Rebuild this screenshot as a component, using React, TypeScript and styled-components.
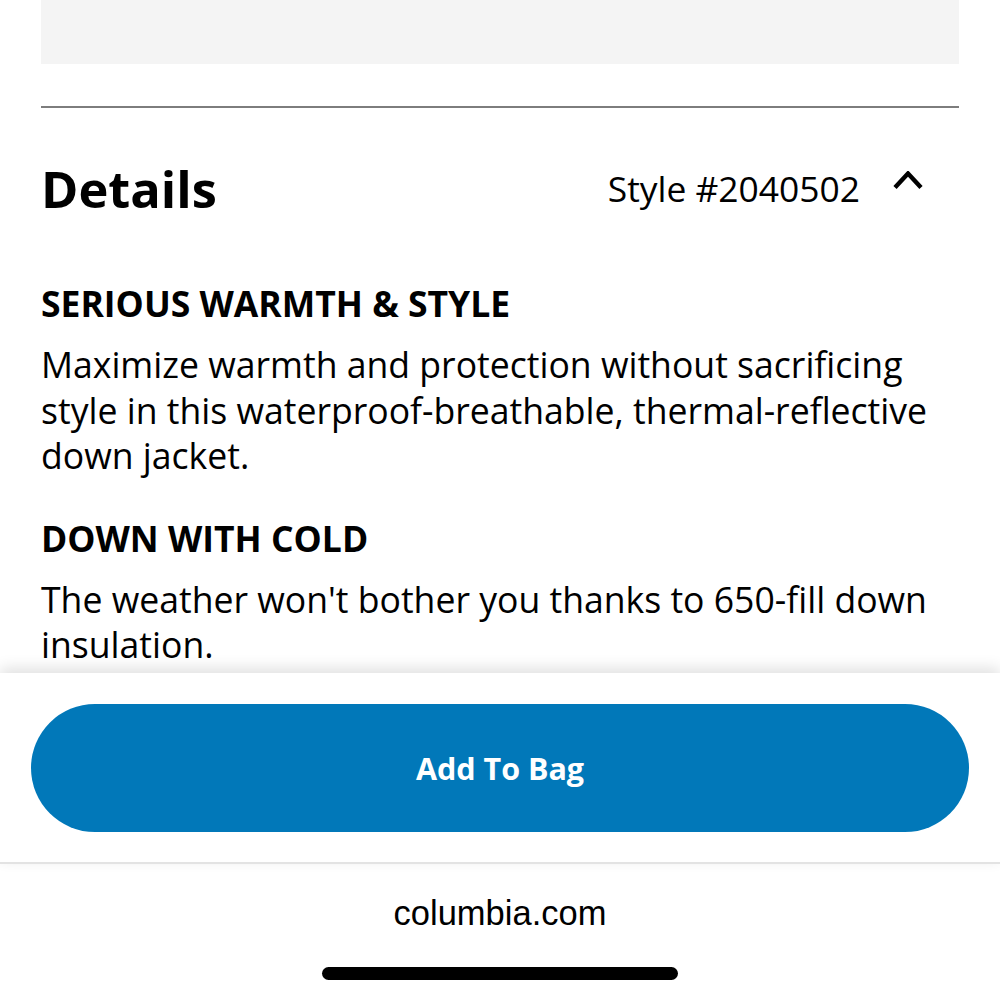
import styled, { createGlobalStyle } from 'styled-components';

const GlobalStyle = createGlobalStyle`
  html, body {
    margin: 0;
    padding: 0;
    background: #fff;
  }
  body {
    font-family: 'Open Sans', 'Noto Sans', sans-serif;
    color: #000;
  }
  * {
    box-sizing: border-box;
  }
`;

interface Section {
  title: string;
  text: string;
}

const sections: Section[] = [
  {
    title: 'SERIOUS WARMTH & STYLE',
    text: 'Maximize warmth and protection without sacrificing style in this waterproof-breathable, thermal-reflective down jacket.',
  },
  {
    title: 'DOWN WITH COLD',
    text: "The weather won't bother you thanks to 650-fill down insulation.",
  },
];

const ChevronUp = () => (
  <Chevron viewBox="0 0 30 18" fill="none">
    <polyline
      points="2,16.5 15,2.5 28,16.5"
      stroke="#000"
      strokeWidth="4.4"
      strokeLinejoin="miter"
    />
  </Chevron>
);

const App = () => {
  return (
    <>
      <GlobalStyle />
      <Page>
        <Scroller>
          <ImagePlaceholder />
          <Divider />
          <DetailsHeader>
            <DetailsTitle>Details</DetailsTitle>
            <HeaderRight>
              <StyleNumber>Style #2040502</StyleNumber>
              <ChevronUp />
            </HeaderRight>
          </DetailsHeader>
          <SectionList>
            {sections.map((s) => (
              <SectionBlock key={s.title}>
                <SectionTitle>{s.title}</SectionTitle>
                <SectionText>{s.text}</SectionText>
              </SectionBlock>
            ))}
          </SectionList>
        </Scroller>
        <StickyBar>
          <AddButton type="button">Add To Bag</AddButton>
        </StickyBar>
        <BrowserBar>
          <Domain>columbia.com</Domain>
          <HomeIndicator />
        </BrowserBar>
      </Page>
    </>
  );
};

const Page = styled.div`
  width: 1000px;
  height: 1000px;
  display: flex;
  flex-direction: column;
  overflow: hidden;
  background: #fff;
`;
const Scroller = styled.div`
  flex: 1;
  overflow: hidden;
  padding: 0 41px;
`;
const ImagePlaceholder = styled.div`
  height: 64px;
  background: #f4f4f4;
`;
const Divider = styled.div`
  height: 2px;
  margin-top: 42px;
  background: #7d7d7d;
`;
const DetailsHeader = styled.div`
  display: flex;
  justify-content: space-between;
  align-items: center;
  height: 58px;
  margin-top: 52px;
`;
const DetailsTitle = styled.h2`
  margin: 0;
  font-size: 50.6px;
  line-height: 58px;
  font-weight: 700;
`;
const HeaderRight = styled.div`
  display: flex;
  align-items: flex-start;
  height: 100%;
`;
const StyleNumber = styled.span`
  font-size: 35.4px;
  line-height: 48px;
  margin-top: 4px;
`;
const Chevron = styled.svg`
  width: 30px;
  height: 18px;
  margin: 11px 36px 0 33px;
  flex-shrink: 0;
`;
const SectionList = styled.div`
  display: flex;
  flex-direction: column;
  gap: 37px;
  margin-top: 63px;
`;
const SectionBlock = styled.div`
  display: flex;
  flex-direction: column;
  gap: 17px;
`;
const SectionTitle = styled.h3`
  margin: 0;
  font-size: 35.5px;
  line-height: 44px;
  font-weight: 700;
`;
const SectionText = styled.p`
  margin: 0;
  font-size: 35.6px;
  line-height: 45.5px;
  font-weight: 400;
`;
const StickyBar = styled.div`
  position: relative;
  z-index: 1;
  flex-shrink: 0;
  padding: 31px 31px 30px;
  background: #fff;
  border-bottom: 2px solid #e3e3e3;
  box-shadow: 0 -5px 14px rgba(0, 0, 0, 0.12);
`;
const AddButton = styled.button`
  display: flex;
  align-items: center;
  justify-content: center;
  width: 100%;
  height: 128px;
  border: none;
  border-radius: 64px;
  background: #0178b9;
  color: #fff;
  font-family: 'Open Sans', sans-serif;
  font-size: 30.5px;
  font-weight: 700;
  cursor: pointer;
`;
const BrowserBar = styled.div`
  height: 136px;
  flex-shrink: 0;
  display: flex;
  flex-direction: column;
  align-items: center;
  padding-top: 29px;
  background: #fff;
`;
const Domain = styled.div`
  font-family: 'Liberation Sans', Arial, sans-serif;
  font-size: 34.5px;
  line-height: 40px;
  color: #000;
`;
const HomeIndicator = styled.div`
  width: 356px;
  height: 13px;
  margin-top: 34px;
  border-radius: 7px;
  background: #000;
`;

export default App;
